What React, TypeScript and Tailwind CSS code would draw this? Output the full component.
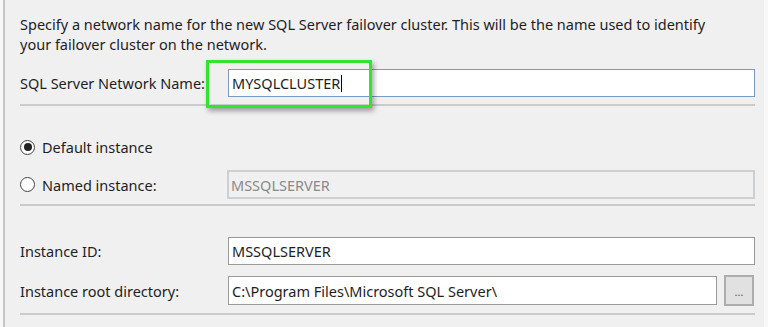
import React from 'react';

const font = { fontFamily: '"Noto Sans", "Open Sans", sans-serif' };

const Radio = ({ checked, label }: { checked?: boolean; label: string }) => (
  <div className="flex items-center gap-[7px] w-[207px]">
    <span className="flex h-[15px] w-[15px] items-center justify-center rounded-full border border-[#444] bg-white">
      {checked && <span className="h-[8px] w-[8px] rounded-full bg-[#222]" />}
    </span>
    <span>{label}</span>
  </div>
);

const App = () => {
  return (
    <div className="h-[327px] w-[768px] overflow-hidden bg-[#f8f8f8] text-[14.5px] leading-[20px] text-[#1e1e1e]" style={font}>
      <div className="ml-[3px] h-full w-[761px] border-l-2 border-[#c6c6c6] bg-[#f0f0f0] pl-[15px] pr-[6px]">
        <p className="pt-[14px] leading-[20px]">
          Specify a network name for the new SQL Server failover cluster. This will be the name used to identify
          <br />
          your failover cluster on the network.
        </p>

        <div className="relative mt-[15px] flex items-center">
          <span className="w-[208px]">SQL Server Network Name:</span>
          <div className="flex h-[28px] w-[527px] items-center border border-[#7a9ac0] bg-white pl-[3px]">
            MYSQLCLUSTER<span className="ml-[1px] h-[17px] w-[1px] bg-black" />
          </div>
          <div className="absolute left-[186px] top-[-9px] h-[48px] w-[166px] border-[3px] border-[#2ee62e] shadow-[2px_3px_5px_rgba(0,0,0,0.35)]" />
        </div>
        <div className="mt-[7px] h-[2px] w-[735px] bg-[#cbcbcb]" />

        <div className="mt-[31px] flex items-center">
          <Radio checked label="Default instance" />
        </div>
        <div className="mt-[13px] flex items-center">
          <Radio label="Named instance:" />
          <div className="flex h-[29px] w-[528px] items-center border-2 border-[#cdd0d3] bg-[#f0f0f0] pl-[2px] text-[#8a8a8a]">
            MSSQLSERVER
          </div>
        </div>
        <div className="mt-[5px] h-[2px] w-[735px] bg-[#cbcbcb]" />

        <div className="mt-[31px] flex items-center">
          <span className="w-[208px]">Instance ID:</span>
          <div className="flex h-[28px] w-[527px] items-center border border-[#9a9a9a] bg-white pl-[3px]">
            MSSQLSERVER
          </div>
        </div>
        <div className="mt-[10px] flex items-center">
          <span className="w-[208px]">Instance root directory:</span>
          <div className="flex h-[29px] w-[489px] items-center border border-[#9a9a9a] bg-white pl-[3px]">
            C:\Program Files\Microsoft SQL Server\
          </div>
          <button className="ml-[7px] flex h-[31px] w-[30px] items-start justify-center border-2 border-[#adadad] bg-[#e1e1e1] pt-[9px] text-[11px] leading-none text-[#555]">
            ...
          </button>
        </div>
        <div className="mt-[7px] h-[2px] w-[735px] bg-[#cbcbcb]" />
      </div>
    </div>
  );
};

export default App;
